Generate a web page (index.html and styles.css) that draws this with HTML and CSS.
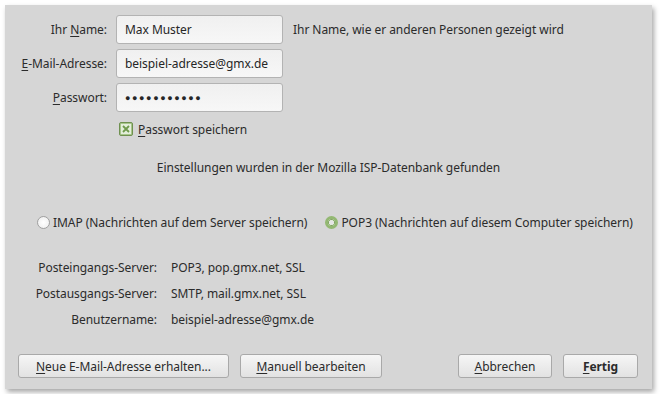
FILE: index.html
```html
<!DOCTYPE html>
<html lang="de">
<head>
  <meta charset="UTF-8">
  <title>Konto einrichten</title>
  <link rel="stylesheet" href="styles.css">
</head>
<body>
  <div class="dialog">
    <div class="form">
      <label class="label">Ihr <u>N</u>ame:</label>
      <div class="entry">Max Muster</div>
      <span class="hint">Ihr Name, wie er anderen Personen gezeigt wird</span>

      <label class="label"><u>E</u>-Mail-Adresse:</label>
      <div class="entry">beispiel-adresse@gmx.de</div>
      <span></span>

      <label class="label"><u>P</u>asswort:</label>
      <div class="entry dots">●●●●●●●●●●●</div>
      <span></span>
    </div>

    <div class="check-row">
      <span class="checkbox">
        <svg viewBox="0 0 8 8" width="8" height="8"><path d="M1 1L7 7M7 1L1 7" stroke="#6f9a4c" stroke-width="1.8"/></svg>
      </span>
      <span><u>P</u>asswort speichern</span>
    </div>

    <p class="status">Einstellungen wurden in der Mozilla ISP-Datenbank gefunden</p>

    <div class="radios">
      <span class="radio-item"><span class="radio"></span>IMAP (Nachrichten auf dem Server speichern)</span>
      <span class="radio-item"><span class="radio checked"></span>POP3 (Nachrichten auf diesem Computer speichern)</span>
    </div>

    <div class="servers">
      <span class="key">Posteingangs-Server:</span>
      <span>POP3, pop.gmx.net, SSL</span>
      <span class="key">Postausgangs-Server:</span>
      <span>SMTP, mail.gmx.net, SSL</span>
      <span class="key">Benutzername:</span>
      <span>beispiel-adresse@gmx.de</span>
    </div>

    <div class="buttons">
      <div class="group">
        <button class="button wide"><u>N</u>eue E-Mail-Adresse erhalten...</button>
        <button class="button manual"><u>M</u>anuell bearbeiten</button>
      </div>
      <div class="group">
        <button class="button cancel"><u>A</u>bbrechen</button>
        <button class="button done"><u>F</u>ertig</button>
      </div>
    </div>
  </div>
</body>
</html>
```

FILE: styles.css
```css
body {
  margin: 0;
  background-color: #ffffff;
  font-family: "Noto Sans", "Open Sans", sans-serif;
  font-size: 12px;
  letter-spacing: -0.05px;
  color: #2b2b2b;
  white-space: nowrap;
}

.dialog {
  margin: 5px;
  width: 647px;
  height: 384px;
  box-sizing: border-box;
  padding-top: 10px;
  background-color: #d6d6d6;
  box-shadow: 2px 3px 5px rgba(0, 0, 0, 0.35);
  display: flex;
  flex-direction: column;
}

u {
  text-decoration: underline;
  text-underline-offset: 2px;
}

.form {
  display: grid;
  grid-template-columns: 102px 167px 1fr;
  column-gap: 9px;
  row-gap: 5px;
  align-items: center;
}

.label {
  text-align: right;
}

.entry {
  height: 29px;
  box-sizing: border-box;
  padding: 0 8px;
  line-height: 27px;
  border: 1px solid #b3b3b3;
  border-radius: 3px;
  background: linear-gradient(#f0f0f0, #f7f7f7);
  color: #262626;
  overflow: hidden;
}

.dots {
  font-size: 9px;
  letter-spacing: 1.6px;
}

.hint {
  padding-left: 1px;
}

.check-row {
  display: flex;
  align-items: center;
  gap: 5px;
  margin: 9px 0 0 114px;
  height: 16px;
}

.checkbox {
  width: 14px;
  height: 14px;
  box-sizing: border-box;
  border: 1px solid #6f9050;
  border-radius: 2px;
  background-color: #a7c68a;
  display: flex;
  align-items: center;
  justify-content: center;
}

.checkbox svg {
  background-color: #e4eedb;
  padding: 1px;
}

.status {
  margin: 22px 0 0;
  text-align: center;
}

.radios {
  display: flex;
  gap: 18px;
  margin: 38px 0 0 32px;
}

.radio-item {
  display: flex;
  align-items: center;
  gap: 3px;
}

.radio {
  width: 13px;
  height: 13px;
  box-sizing: border-box;
  border: 1px solid #a0a0a0;
  border-radius: 50%;
  background: radial-gradient(#ffffff, #ececec);
}

.radio.checked {
  border: 3px solid #93b872;
  background: radial-gradient(#e6e6e6 40%, #ffffff 45%);
  box-shadow: 0 0 0 1px #7da05e inset;
}

.servers {
  display: grid;
  grid-template-columns: 152px 1fr;
  column-gap: 14px;
  row-gap: 8px;
  margin-top: 28px;
  line-height: 18px;
}

.servers .key {
  text-align: right;
}

.buttons {
  margin-top: auto;
  padding: 0 14px 11px 13px;
  display: flex;
  justify-content: space-between;
}

.group {
  display: flex;
  gap: 11px;
}

.button {
  height: 24px;
  padding: 0 10px;
  font-family: inherit;
  font-size: 12px;
  letter-spacing: -0.05px;
  color: #2b2b2b;
  border: 1px solid #a9a9a9;
  border-radius: 3px;
  background: linear-gradient(#f6f6f6, #e2e2e2);
}

.wide {
  width: 211px;
}

.manual {
  width: 142px;
}

.cancel {
  width: 94px;
}

.done {
  width: 75px;
  font-weight: bold;
}
```
